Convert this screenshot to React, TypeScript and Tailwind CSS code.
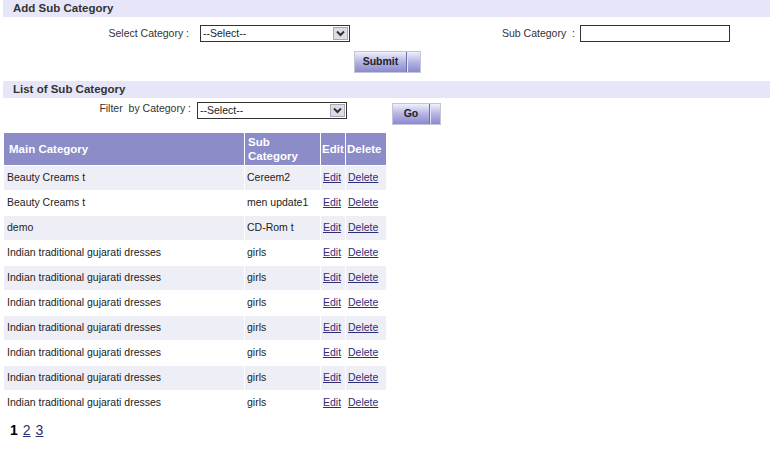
import React from 'react';

const rows = [
  { main: 'Beauty Creams t', sub: 'Cereem2' },
  { main: 'Beauty Creams t', sub: 'men update1' },
  { main: 'demo', sub: 'CD-Rom t' },
  { main: 'Indian traditional gujarati dresses', sub: 'girls' },
  { main: 'Indian traditional gujarati dresses', sub: 'girls' },
  { main: 'Indian traditional gujarati dresses', sub: 'girls' },
  { main: 'Indian traditional gujarati dresses', sub: 'girls' },
  { main: 'Indian traditional gujarati dresses', sub: 'girls' },
  { main: 'Indian traditional gujarati dresses', sub: 'girls' },
  { main: 'Indian traditional gujarati dresses', sub: 'girls' },
];

// Old-style select box with a grey arrow button
function FakeSelect() {
  return (
    <div className="flex h-[17px] w-[150px] items-center border border-[#333] bg-white">
      <span className="flex-1 pl-[2px] text-[10.5px] leading-none text-[#222]">--Select--</span>
      <span className="mr-[1px] flex h-[13px] w-[15px] items-center justify-center border border-[#a8a8b4] bg-[#dcdce4]">
        <svg width="9" height="7" viewBox="0 0 9 7">
          <path d="M1 1.5l3.5 3.5L8 1.5" fill="none" stroke="#333" strokeWidth="2" />
        </svg>
      </span>
    </div>
  );
}

// Two-part gradient button with a divider near the right edge
function GradButton({ label, left, right }: { label: string; left: string; right: string }) {
  return (
    <div className="flex h-[22px] border border-[#c4c4d4] bg-linear-to-b from-[#f0f0fb] via-[#b4b4e2] to-[#8a8ad2]">
      <span className={`${left} flex items-center justify-center text-[10.5px] font-bold text-[#222]`}>{label}</span>
      <span className="w-px bg-[#6e6eae]" />
      <span className={`${right} border-l border-[#e4e4f4]`} />
    </div>
  );
}

export default function App() {
  return (
    <div className="min-h-[457px] bg-white pl-[3px] font-['Liberation_Sans',Arial,sans-serif] text-[#333]">
      {/* Add section */}
      <div className="flex h-[17px] items-center bg-[#e6e6f8] pl-[10px] pt-px text-[11.5px] font-bold text-[#333]">
        Add Sub Category
      </div>
      <div className="mt-[8px] flex h-[17px] items-center">
        <span className="w-[187px] pr-[1px] text-right text-[10.5px]">Select Category :</span>
        <div className="ml-[10px]">
          <FakeSelect />
        </div>
        <span className="ml-[152px] text-[10.5px]">Sub Category&nbsp; :</span>
        <div className="ml-[5px] h-[17px] w-[150px] border border-[#333] bg-white" />
      </div>
      <div className="ml-[351px] mt-[9px] w-[67px]">
        <GradButton label="Submit" left="w-[51px]" right="w-[13px]" />
      </div>

      {/* List section */}
      <div className="mt-[8px] flex h-[17px] items-center bg-[#e6e6f8] pl-[10px] pt-px text-[11.5px] font-bold text-[#333]">
        List of Sub Category
      </div>
      <div className="mt-[4px] flex items-start">
        <span className="-mt-px w-[188px] text-right text-[10.5px]">Filter&nbsp; by Category :</span>
        <div className="ml-[6px]">
          <FakeSelect />
        </div>
        <div className="ml-[45px] mt-px w-[49px]">
          <GradButton label="Go" left="w-[36px]" right="w-[10px]" />
        </div>
      </div>

      <table className="mt-[7px] border-separate border-spacing-[1px] text-[10.5px]">
        <thead>
          <tr className="text-left text-[11.5px] font-bold leading-[14px] text-white">
            <th className="h-[32px] w-[240px] bg-[#8c8cc8] pl-[5px]">Main Category</th>
            <th className="w-[75px] bg-[#8c8cc8] pl-[3px]">
              Sub
              <br />
              Category
            </th>
            <th className="w-[24px] bg-[#8c8cc8] pl-px">Edit</th>
            <th className="w-[40px] bg-[#8c8cc8] pl-px">Delete</th>
          </tr>
        </thead>
        <tbody>
          {rows.map((r, i) => {
            const bg = i % 2 === 0 ? 'bg-[#eeeef6]' : 'bg-white';
            return (
              <tr key={i} className="text-[#222]">
                <td className={`${bg} h-[24px] pl-[3px]`}>{r.main}</td>
                <td className={`${bg} pl-[2px]`}>{r.sub}</td>
                <td className={`${bg} pl-[2px]`}>
                  <a href="#" className="text-[#2e2e78] underline">Edit</a>
                </td>
                <td className={`${bg} pl-[2px]`}>
                  <a href="#" className="text-[#2e2e78] underline">Delete</a>
                </td>
              </tr>
            );
          })}
        </tbody>
      </table>

      <div className="mt-[4px] flex gap-[5px] pl-[7px] text-[14px]">
        <span className="font-bold text-black">1</span>
        <a href="#" className="text-[#2e2e78] underline">2</a>
        <a href="#" className="text-[#2e2e78] underline">3</a>
      </div>
    </div>
  );
}
